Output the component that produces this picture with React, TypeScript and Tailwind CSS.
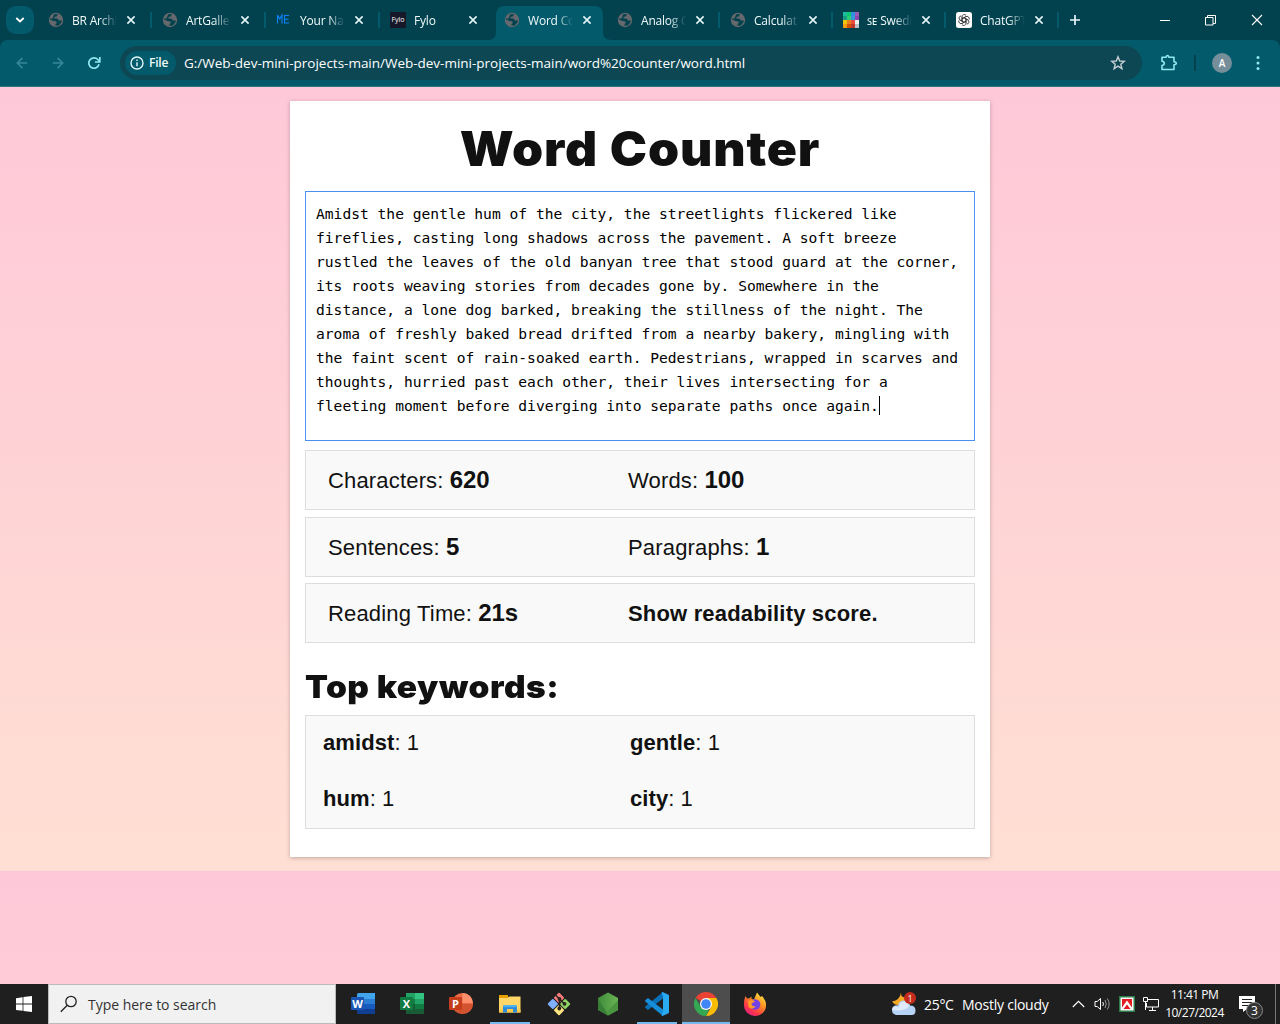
import React from 'react';
import { ArrowLeft, ArrowRight } from 'lucide-react';

const ui = "font-['Open_Sans','Noto_Sans',sans-serif]";

function Globe() {
  return (
    <svg viewBox="0 0 16 16" className="h-4 w-4 shrink-0">
      <circle cx="8" cy="8" r="7.2" fill="#65686c" />
      <path d="M6.2 2.2 9.8 2 9 4.2 6.4 5 6.6 6.5 9.8 6.8 11 8.8 13.8 8.2 13.3 10.4 10.8 13.4 7.4 13.8 7.6 12 9 10.8 7.8 9.2 5.4 9 2.2 7.6 2.3 6 4.2 7 5 5.2Z" fill="#02424f" />
    </svg>
  );
}

function MeIcon() {
  return (
    <svg viewBox="0 0 16 16" className="h-4 w-4 shrink-0" fill="none" stroke="#0a84ff" strokeWidth="1.1">
      <path d="M1.500 11.500V3l2.200 4L6 3v8.500M13 3.500H8.500v7.500h4.500M8.500 7.200h4" />
    </svg>
  );
}

function FyloIcon() {
  return (
    <span className="flex h-4 w-4 shrink-0 items-center justify-center overflow-hidden rounded-[1px] bg-[#17172a] pb-[2px] font-['Open_Sans',sans-serif] text-[7px] leading-none text-white">
      Fylo
    </span>
  );
}

const mosaic = [
  '#1abc9c', '#07c96f', '#2f8fe0', '#9b59b6',
  '#12a085', '#2ecc71', '#3498db', '#8e44ad',
  '#f1c40f', '#e67e22', '#e74c3c', '#ecf0f1',
  '#f59c12', '#d35400', '#c0392b', '#bdc3c7',
];

function MosaicIcon() {
  return (
    <span className="grid h-4 w-4 shrink-0 grid-cols-4">
      {mosaic.map((c) => (
        <span key={c} style={{ backgroundColor: c }} />
      ))}
    </span>
  );
}

function GptIcon() {
  return (
    <svg viewBox="0 0 16 16" className="h-4 w-4 shrink-0">
      <rect width="16" height="16" rx="2.500" fill="#fff" />
      <g fill="none" stroke="#333" strokeWidth="0.85">
        {[0, 60, 120, 180, 240, 300].map((a) => (
          <path key={a} transform={`rotate(${a} 8 8)`} d="M6 9V4.800A2.300 2.300 0 0 1 10.100 3.400M6 6.900 9.800 4.700" />
        ))}
      </g>
    </svg>
  );
}

function Close() {
  return (
    <svg viewBox="0 0 10 10" className="h-[10px] w-[10px] shrink-0" stroke="#e6f6f8" strokeWidth="1.600">
      <path d="M1.400 1.400 8.600 8.600M8.600 1.400 1.400 8.600" />
    </svg>
  );
}

const tabs = [
  { t: 'BR Archi', i: <Globe /> },
  { t: 'ArtGalle', i: <Globe /> },
  { t: 'Your Na', i: <MeIcon /> },
  { t: 'Fylo', i: <FyloIcon /> },
  { t: 'Word Co', i: <Globe /> },
  { t: 'Analog C', i: <Globe /> },
  { t: 'Calculat', i: <Globe /> },
  { t: 'ꜱᴇ Swedi', i: <MosaicIcon /> },
  { t: 'ChatGPT', i: <GptIcon /> },
];

function Tab({ t, i, active, divider, wide }: { t: string; i: React.ReactNode; active: boolean; divider: boolean; wide: boolean }) {
  return (
    <div className={'relative flex h-[34px] items-start pt-[5px] pl-[14px] ' + (wide ? 'w-[114px]' : 'w-[113px]')}>
      {active && (
        <svg className="absolute -left-[2px] top-0 h-[34px] w-[124px]" viewBox="0 0 124 34" fill="#035a6b">
          <path d="M0 34Q8 34 8 26V9Q8 0 17 0H106Q115 0 115 9V26Q115 34 124 34Z" />
        </svg>
      )}
      <div className="relative flex items-center">
        {i}
        <span className="ml-2 h-[18px] w-[45px] overflow-hidden whitespace-nowrap text-[12px] leading-[20px] tracking-[-0.200px] text-[#effafa] [mask-image:linear-gradient(to_right,black_62%,transparent_100%)]">
          {t}
        </span>
        <span className="ml-[9px] flex">
          <Close />
        </span>
      </div>
      {divider && <span className="absolute -right-[4px] top-[6px] h-4 w-[2px] bg-[#035a6b]" />}
    </div>
  );
}

function TabStrip() {
  return (
    <div className="flex h-10 items-start bg-[#02424f] pt-[6px]">
      <div className="ml-[6px] flex h-7 w-7 items-center justify-center rounded-[10px] bg-[#035a6b]">
        <svg viewBox="0 0 10 6" className="h-[6px] w-[10px]" fill="none" stroke="#fff" strokeWidth="1.800">
          <path d="M1.300 1 5 4.500 8.700 1" />
        </svg>
      </div>
      <div className="flex">
        {tabs.map((x, n) => (
          <Tab key={x.t} t={x.t} i={x.i} active={n === 4} divider={n !== 3 && n !== 4} wide={n < 4} />
        ))}
      </div>
      <svg viewBox="0 0 12 12" className="ml-[14px] mt-[8px] h-3 w-3" stroke="#e6f6f8" strokeWidth="1.700">
        <path d="M6 1v10M1 6h10" />
      </svg>
      <div className="mr-[17px] ml-auto flex h-7 items-center gap-[35px]">
        <span className="h-px w-[10px] bg-white" />
        <svg viewBox="0 0 11 11" className="h-[11px] w-[11px]" fill="none" stroke="#fff">
          <path d="M.5 2.500h7.500v7.500h-7.500zM2.500 2.500v-2h8v8H8" />
        </svg>
        <svg viewBox="0 0 12 12" className="h-3 w-3" stroke="#fff" strokeWidth="1.100">
          <path d="M1 1l10 10M11 1 1 11" />
        </svg>
      </div>
    </div>
  );
}

function Toolbar() {
  return (
    <div className="bg-[#02424f]">
      <div className="flex h-[47px] items-center rounded-t-[8px] border-b border-[#2b7684] bg-[#035a6b]">
        <ArrowLeft className="ml-[14px] h-4 w-4" color="#378897" strokeWidth={2.400} />
        <ArrowRight className="ml-5 h-4 w-4" color="#378897" strokeWidth={2.400} />
        <svg viewBox="0 0 14 14" className="ml-[21px] h-[14px] w-[14px]" fill="none" stroke="#8eeaf0" strokeWidth="1.700">
          <path d="M12 8.300A5.200 5.200 0 1 1 10.800 3.500L12.500 5.200M12.800 1v5H8" />
        </svg>
        <div className="ml-[19px] flex h-[34px] w-[1022px] items-center rounded-full bg-[#0e4754] pl-[5px]">
          <div className="flex h-6 w-[51px] items-center rounded-full bg-[#035a6b] pl-[5px]">
            <svg viewBox="0 0 14 14" className="h-[14px] w-[14px]" fill="none" stroke="#e6f6f8" strokeWidth="1.400">
              <circle cx="7" cy="7" r="6" />
              <path d="M7 6.200v4M7 3.600v1.400" />
            </svg>
            <span className="ml-[5px] text-[12px] font-semibold tracking-[-0.200px] text-[#effafa]">File</span>
          </div>
          <span className="ml-[8px] pt-px whitespace-nowrap text-[13.500px] tracking-[-0.015px] text-white">
            G:/Web-dev-mini-projects-main/Web-dev-mini-projects-main/word%20counter/word.html
          </span>
          <svg viewBox="0 0 16 16" className="mr-[16px] ml-auto h-4 w-4" fill="none" stroke="#c3cfd2" strokeWidth="1.400">
            <path d="M8 1.800 9.700 6 14.300 6.300 10.800 9.200 11.900 13.700 8 11.200 4.100 13.700 5.200 9.200 1.700 6.300 6.300 6Z" />
          </svg>
        </div>
        <svg viewBox="0 0 18 18" className="ml-[18px] h-[18px] w-[18px]" fill="none" stroke="#8eeaf0" strokeWidth="1.600" strokeLinejoin="round">
          <path d="M2 3.200H6.200Q6.500 1.500 7.500 1.500T8.800 3.200H14V7.800Q16.300 8 16.300 9.300T14 10.800V15.500H2V11.500Q4.300 11 4.300 9.300T2 7.200Z" />
        </svg>
        <span className="ml-[16px] h-4 w-[2px] bg-[#02424f]" />
        <span className="ml-[16px] flex h-5 w-5 items-center justify-center rounded-full bg-[#758e9a] text-[10px] font-semibold text-white">A</span>
        <svg viewBox="0 0 4 16" className="ml-[24px] h-4 w-1" fill="#8eeaf0">
          <circle cx="2" cy="2.500" r="1.500" />
          <circle cx="2" cy="8" r="1.500" />
          <circle cx="2" cy="13.500" r="1.500" />
        </svg>
      </div>
    </div>
  );
}

const lines = [
  'Amidst the gentle hum of the city, the streetlights flickered like',
  'fireflies, casting long shadows across the pavement. A soft breeze',
  'rustled the leaves of the old banyan tree that stood guard at the corner,',
  'its roots weaving stories from decades gone by. Somewhere in the',
  'distance, a lone dog barked, breaking the stillness of the night. The',
  'aroma of freshly baked bread drifted from a nearby bakery, mingling with',
  'the faint scent of rain-soaked earth. Pedestrians, wrapped in scarves and',
  'thoughts, hurried past each other, their lives intersecting for a',
  'fleeting moment before diverging into separate paths once again.',
];

function StatRow({ children, className }: { children: React.ReactNode; className: string }) {
  return (
    <div className={'flex h-[60px] items-center border border-[#ddd] bg-[#f9f9f9] pl-[22px] text-[22px] leading-[33px] tracking-[0.170px] ' + className}>
      {children}
    </div>
  );
}

function Value({ children }: { children: React.ReactNode }) {
  return <b className="text-[24px] tracking-[-0.200px]">{children}</b>;
}

function Counter() {
  return (
    <main className="mt-[14px] h-[756px] w-[700px] bg-white px-[15px] font-['Liberation_Sans',Arial,sans-serif] text-[#111] shadow-[0_1px_4px_rgba(0,0,0,0.25)]">
      <h1 className="h-[90px] scale-x-105 pt-[12px] text-center font-['Arial_Black','Inter',sans-serif] text-[47.500px] leading-[72px] font-black tracking-[0.800px] whitespace-nowrap [word-spacing:1px]">
        Word Counter
      </h1>
      <div className="h-[250px] border border-[#4a90f5] pt-[10px] pl-[10px] font-['Consolas','DejaVu_Sans_Mono',monospace] text-[14.610px] leading-6 text-black">
        {lines.map((l, n) => (
          <div key={l} className="flex items-center whitespace-pre">
            {l}
            {n === 8 && <span className="mb-[2px] h-[19px] w-px bg-black" />}
          </div>
        ))}
      </div>
      <StatRow className="mt-[9px]">
        <span className="w-[300px]">Characters: <Value>620</Value></span>
        <span>Words: <Value>100</Value></span>
      </StatRow>
      <StatRow className="mt-[7px]">
        <span className="w-[300px]">Sentences: <Value>5</Value></span>
        <span>Paragraphs: <Value>1</Value></span>
      </StatRow>
      <StatRow className="mt-[6px]">
        <span className="w-[300px]">Reading Time: <Value>21s</Value></span>
        <b>Show readability score.</b>
      </StatRow>
      <h2 className="mt-[20px] h-[52px] origin-left scale-x-[1.063] font-['Arial_Black','Inter',sans-serif] text-[31.500px] leading-[48px] font-black tracking-[0.500px] whitespace-nowrap">
        Top keywords:
      </h2>
      <div className="grid h-[114px] grid-cols-[307px_1fr] grid-rows-[56px_56px] items-center border border-[#ddd] bg-[#f9f9f9] pl-[17px] text-[22px] leading-[54px] tracking-[0.080px]">
        {['amidst', 'gentle', 'hum', 'city'].map((k) => (
          <span key={k} className="pb-[2px]"><b>{k}</b>: 1</span>
        ))}
      </div>
    </main>
  );
}

function OfficeIcon({ letter, badge, children }: { letter: string; badge: string; children: React.ReactNode }) {
  return (
    <span className="relative block h-6 w-6">
      <svg viewBox="0 0 24 24" className="h-6 w-6">{children}</svg>
      <span className="absolute top-[5px] left-0 flex h-[13px] w-[13px] items-center justify-center rounded-[1px] text-[11px] leading-none font-bold text-white" style={{ backgroundColor: badge }}>
        {letter}
      </span>
    </span>
  );
}

const apps = [
  {
    n: 'word', state: '', icon: (
      <OfficeIcon letter="W" badge="#1b56b5">
        <path fill="#41a5ee" d="M6 2.500Q6 1 7.500 1H24v6H6z" /><path fill="#2b7cd3" d="M6 7h18v5H6z" /><path fill="#185abd" d="M6 12h18v5H6z" /><path fill="#103f91" d="M6 17h18v5H7.500Q6 22 6 20.500z" />
      </OfficeIcon>
    ),
  },
  {
    n: 'excel', state: '', icon: (
      <OfficeIcon letter="X" badge="#107c41">
        <path fill="#21a366" d="M6 1h9v6H6z" /><path fill="#33c481" d="M15 1h9v6h-9z" /><path fill="#107c41" d="M6 7h9v5H6z" /><path fill="#21a366" d="M15 7h9v5h-9z" /><path fill="#185c37" d="M6 12h9v10H6zM15 17h9v5h-9z" /><path fill="#107c41" d="M15 12h9v5h-9z" />
      </OfficeIcon>
    ),
  },
  {
    n: 'powerpoint', state: '', icon: (
      <OfficeIcon letter="P" badge="#c43e1c">
        <circle cx="13.500" cy="11.500" r="10.500" fill="#ed6c47" /><path fill="#ff8f6b" d="M13.500 1A10.500 10.500 0 0 1 24 11.500H13.500z" /><path fill="#d35230" d="M3 11.500h21a10.500 10.500 0 0 1-21 0z" />
      </OfficeIcon>
    ),
  },
  {
    n: 'files', state: 'open', icon: (
      <svg viewBox="0 0 24 24" className="h-6 w-6">
        <path fill="#e8a000" d="M1 3h9v4H1z" /><path fill="#ffd667" d="M1 6h8.500l1.500-1.500h11.500V20.500H1z" /><path fill="#fbc84b" d="M1 17.500h21.500v3H1z" /><path fill="#2e8bd6" d="M5 20.500V15Q5 13 7 13h10q2 0 2 2v5.500h-4V17H9v3.500z" /><path fill="#4db2f0" d="M5.500 13h13v2.200h-13z" />
      </svg>
    ),
  },
  {
    n: 'git', state: '', icon: (
      <svg viewBox="0 0 24 24" className="h-6 w-6">
        <g transform="rotate(45 12 12)">
          <rect x="3.800" y="3.800" width="7.700" height="7.700" rx="1" fill="#f87c7c" />
          <rect x="3.800" y="12.500" width="7.700" height="7.700" rx="1" fill="#80b0ff" />
          <rect x="12.500" y="3.800" width="7.700" height="7.700" rx="1" fill="#8fd162" />
          <rect x="12.500" y="12.500" width="7.700" height="7.700" rx="1" fill="#ffe680" />
        </g>
        <path d="M8.500 3 12.500 7v10M12.500 7l5 5" stroke="#2b2320" strokeWidth="1.500" fill="none" /><g fill="#2b2320"><circle cx="12.500" cy="7" r="1.900" /><circle cx="12.300" cy="16.500" r="1.900" /><circle cx="17.500" cy="11.800" r="1.900" /></g>
      </svg>
    ),
  },
  {
    n: 'node', state: '', icon: (
      <svg viewBox="0 0 24 24" className="h-6 w-6">
        <defs><linearGradient id="nd" x1="0" y1="0" x2="1" y2="0"><stop offset="0" stopColor="#3f8b3d" /><stop offset="1" stopColor="#6bb552" /></linearGradient></defs>
        <path fill="url(#nd)" d="M12 .5 22 6v12l-10 5.500L2 18V6z" /><path fill="#3a7d37" d="M2 7 10.500 20.500 12 23.500 2 18z" /><path fill="#4b9440" d="M22 8v10l-10 5.500-1.500-3z" />
      </svg>
    ),
  },
  {
    n: 'code', state: 'open', icon: (
      <svg viewBox="0 0 24 24" className="h-6 w-6">
        <path fill="#0a70b8" d="M18 0v6.500L3 18 .2 15.800V14.500z" /><path fill="#168dd8" d="M.2 8.200 3 6 18 17.500V24L.2 9.500z" /><path fill="#2aaaf2" d="M17.500 0 24 3v18l-6.500 3-1-.8L18 20V4L16.500.8z" />
      </svg>
    ),
  },
  {
    n: 'chrome', state: 'active', icon: (
      <svg viewBox="0 0 24 24" className="h-6 w-6">
        <path fill="#ea4335" d="M12 12 1.600 6A12 12 0 0 1 22.400 6z" /><path fill="#fbbc04" d="M12 6H22.400A12 12 0 0 1 12 24L17.200 15z" /><path fill="#34a853" d="M1.600 6 6.800 15 12 18l3-.5L12 24A12 12 0 0 1 1.600 6z" />
        <circle cx="12" cy="12" r="6" fill="#fff" /><circle cx="12" cy="12" r="4.800" fill="#4285f4" />
      </svg>
    ),
  },
  {
    n: 'firefox', state: '', icon: (
      <svg viewBox="0 0 24 24" className="h-6 w-6">
        <defs><linearGradient id="fx" x1="0.900" y1="0" x2="0.200" y2="1"><stop offset="0" stopColor="#fff44f" /><stop offset=".4" stopColor="#ff9320" /><stop offset=".75" stopColor="#ff3647" /><stop offset="1" stopColor="#e01e8e" /></linearGradient></defs>
        <path fill="url(#fx)" d="M2.500 4 4 6.500 6.500 6.300 8.500 4.500V7L11 7.500 14 .5Q16 3 17.500 5L19 4Q23.500 9 23 14A11 10.500 0 0 1 1 13Q.8 8 2.500 4z" /><circle cx="12" cy="12.500" r="5.300" fill="#7542e5" /><path fill="#ff9a28" d="M5 9Q9 7 12 9.500L8.500 11.500Q9 15 13 14.500 9 18.500 5.500 15z" />
      </svg>
    ),
  },
];

function Taskbar() {
  return (
    <footer className="flex h-10 bg-[#1f1f1f] text-white">
      <div className="flex w-12 items-center justify-center">
        <svg viewBox="0 0 16 16" className="h-4 w-4" fill="#fff">
          <path d="M0 2.200 6.600 1.200V7.600H0zM7.400 1.100 16 0V7.600H7.400zM0 8.400H6.600V14.800L0 13.900zM7.400 8.400H16V16L7.400 14.900z" />
        </svg>
      </div>
      <div className="flex w-[288px] items-center border border-[#bbb] bg-[#f1f1f1] pl-[11px]">
        <svg viewBox="0 0 18 18" className="h-[18px] w-[18px]" fill="none" stroke="#222" strokeWidth="1.300">
          <circle cx="11" cy="6.500" r="5.200" /><path d="M7.300 10.200.8 16.700" />
        </svg>
        <span className="ml-[10px] text-[14px] tracking-[-0.030px] text-[#333]">Type here to search</span>
      </div>
      <div className="ml-[3px] flex">
        {apps.map((a) => (
          <div key={a.n} className={'relative mr-px flex w-12 items-center justify-center ' + (a.state === 'active' ? 'bg-[#4d4d4d]' : '')}>
            {a.icon}
            {a.state && <span className={'absolute bottom-0 h-[2px] bg-[#76b9ed] ' + (a.state === 'active' ? 'w-12' : 'w-10')} />}
          </div>
        ))}
      </div>
      <div className="ml-auto flex items-center">
        <span className="relative -left-px h-6 w-[25px]">
          <svg viewBox="0 0 25 24" className="h-6 w-[25px]">
            <path fill="#f6a723" d="M10 .5Q9 8 1 9.500 5 15 11 12 15 9 14 5 10 6 10 .5z" /><path fill="#b7d2f7" d="M5 23A5 5 0 0 1 4 13.500Q6 13 7 13.500 8 8.500 13 8.500T19 13.500Q24.500 13.500 24.500 18.500T20 23z" /><path fill="#e9f1fd" d="M4 14.500Q6.500 14 8 15.500 8 9.500 13 9.500 17 9.500 18 14.500 12 20.500 1 17.500 1.500 15 4 14.500z" opacity=".8" />
          </svg>
          <span className="absolute top-0 left-[13px] flex h-3 w-3 items-center justify-center rounded-full bg-[#c42b1c] text-[9px] leading-none">1</span>
        </span>
        <span className="ml-[7px] w-[38px] text-[14px] whitespace-nowrap tracking-[-0.300px]">25°C</span>
        <span className="w-[87px] text-[14px] whitespace-nowrap tracking-[-0.240px]">Mostly cloudy</span>
        <svg viewBox="0 0 13 8" className="ml-[23px] h-2 w-[13px]" fill="none" stroke="#fff" strokeWidth="1.200"><path d="M.8 7 6.500 1.300 12.200 7" /></svg>
        <svg viewBox="0 0 17 16" className="ml-[9px] h-4 w-[17px]" fill="none" stroke="#fff"><path d="M1 5.500h2.200L6.500 2.500v11L3.200 10.500H1zM8.800 6Q10 8 8.800 10" /><path stroke="#999" d="M11 4Q13.500 8 11 12M13.300 2.500Q17 8 13.300 13.500" /></svg>
        <svg viewBox="0 0 16 16" className="ml-[8px] h-4 w-4"><path fill="#2e7d4b" d="M0 0h16v16H0z" /><path fill="#fff" d="M1.500 1.500h13v13h-13z" /><path fill="#e31b23" d="M3 3h10v10H3z" /><path fill="#fff" d="M8 4.500 13 11.500V13H11.500L8 8.500 4.500 13H3v-1.500z" /><path fill="#e31b23" d="M8 9.500l2.500 3.500h-5z" /></svg>
        <svg viewBox="0 0 16 14" className="ml-[8px] h-[14px] w-4" fill="none" stroke="#fff"><path d="M5 2.500h10.500v7.500H3.500V6M9.500 10v3M6 13.500h7M.5.500h4v4h-4zM2.500 4.500V13" /></svg>
        <div className="ml-[5px] flex w-[61px] flex-col items-center text-[12px] leading-[18px] tracking-[-0.500px] whitespace-nowrap">
          <span>11:41 PM</span>
          <span>10/27/2024</span>
        </div>
        <span className="relative ml-[14px] h-[24px] w-[24px]">
          <svg viewBox="0 0 24 24" className="h-6 w-6"><path fill="#fff" d="M0 4h16v13H8l-4 3v-3H0z" /><path stroke="#1f1f1f" d="M3 7.500h10M3 10.500h10M3 13.500h6" /></svg>
          <span className="absolute top-[10px] left-[7px] flex h-[17px] w-[17px] items-center justify-center rounded-full border border-[#888] bg-[#333] text-[12px] leading-none">3</span>
        </span>
        <span className="ml-[12px] h-10 w-px bg-[#777]" />
        <span className="w-1" />
      </div>
    </footer>
  );
}

export default function App() {
  return (
    <div className={'flex h-[1024px] w-[1280px] flex-col overflow-hidden ' + ui}>
      <TabStrip />
      <Toolbar />
      <div className="flex h-[897px] justify-center bg-[linear-gradient(to_bottom,#fec8d8,#ffdfd3)] bg-[length:100%_784px]">
        <Counter />
      </div>
      <Taskbar />
    </div>
  );
}
